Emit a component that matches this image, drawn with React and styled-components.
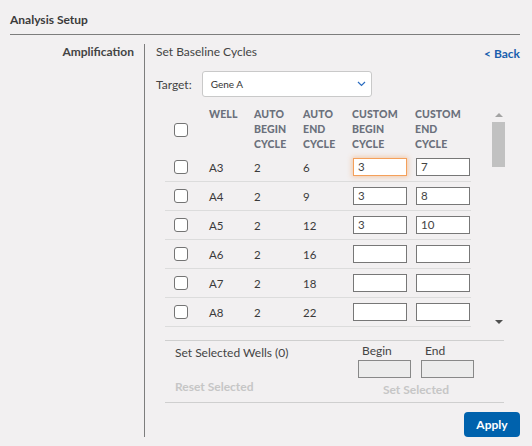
import React from "react";
import styled, { createGlobalStyle } from "styled-components";

const Global = createGlobalStyle`
  html, body { margin: 0; padding: 0; background: #f2f0f1; }
  body { font-family: Lato, "Noto Sans", Arial, sans-serif; color: #333; }
  * { box-sizing: border-box; }
`;

const Page = styled.div`
  width: 532px;
  height: 446px;
  padding: 0 12px 0 10px;
  background: #f2f0f1;
  overflow: hidden;
`;

const TitleBar = styled.div`
  height: 35px;
  padding-top: 5px;
  display: flex;
  align-items: center;
  border-bottom: 1px solid #7d7d7d;
  font-size: 12px;
  font-weight: 700;
  color: #3b3b3b;
`;

const Body = styled.div`
  display: flex;
  margin-top: 9px;
`;

const SideLabel = styled.div`
  width: 135px;
  padding-right: 10px;
  padding-top: 1px;
  text-align: right;
  border-right: 1px solid #7d7d7d;
  font-size: 12px;
  font-weight: 700;
  line-height: 14px;
  color: #444;
`;

const Content = styled.div`
  flex: 1;
  padding-left: 11px;
  display: flex;
  flex-direction: column;
`;

const TopRow = styled.div`
  display: flex;
  justify-content: space-between;
  align-items: flex-start;
  height: 15px;
  padding-top: 1px;
  font-size: 12px;
  line-height: 14px;
  color: #444;
`;

const BackLink = styled.a`
  color: #1a5fae;
  font-weight: 700;
  font-size: 12px;
  line-height: 14px;
  margin-top: 2px;
  text-decoration: none;
`;

const TargetRow = styled.div`
  display: flex;
  align-items: center;
  gap: 10px;
  margin-top: 12px;
  font-size: 12px;
  color: #444;
`;

const Select = styled.div`
  width: 170px;
  height: 26px;
  background: #fff;
  border: 1px solid #c9c9c9;
  border-radius: 3px;
  display: flex;
  align-items: center;
  justify-content: space-between;
  padding: 0 5px 0 8px;
  font-size: 10px;
  color: #333;
`;

const TableArea = styled.div`
  margin-top: 9px;
  margin-left: 9px;
  width: 340px;
  height: 224px;
  display: flex;
  overflow: hidden;
`;

const Table = styled.div`
  width: 306px;
  display: flex;
  flex-direction: column;
`;

const cols = "44px 45px 49px 49px 63px 56px";

const HeaderRow = styled.div`
  display: grid;
  grid-template-columns: ${cols};
  height: 47px;
  padding-top: 1px;
  font-size: 10.5px;
  font-weight: 900;
  line-height: 15px;
  color: #6b707c;
  letter-spacing: 0.1px;
`;

const CheckCell = styled.div`
  display: flex;
  align-items: center;
  padding-left: 9px;
`;

const Box = styled.span`
  display: block;
  width: 14px;
  height: 14px;
  border: 1px solid #747474;
  border-radius: 3px;
  background: #fff;
`;

const Row = styled.div`
  display: grid;
  grid-template-columns: ${cols};
  height: 29px;
  align-items: center;
  border-bottom: 1px solid #dcdcdc;
  font-size: 11.5px;
  color: #3a3a3a;
`;

const Cell = styled.div`
  padding-left: ${(p) => p.$pl || 0}px;
`;

const CycleInput = styled.div`
  width: 54px;
  height: 18px;
  background: #fff;
  border: 1px solid ${(p) => (p.$focus ? "#f4a05a" : "#777")};
  box-shadow: ${(p) => (p.$focus ? "0 0 5px 1px rgba(245,150,80,0.45)" : "none")};
  font-size: 11.5px;
  line-height: 16px;
  padding-left: 4px;
  color: #444;
  margin-left: ${(p) => p.$ml || 0}px;
`;

const Scrollbar = styled.div`
  margin-left: 21px;
  width: 13px;
  display: flex;
  flex-direction: column;
  align-items: center;
  padding: 7px 0 6px;
`;

const Arrow = styled.span`
  width: 0;
  height: 0;
  border-left: 4px solid transparent;
  border-right: 4px solid transparent;
  ${(p) =>
    p.$down
      ? "border-top: 4px solid #505050; margin-top: auto;"
      : "border-bottom: 4px solid #a3a3a3;"}
`;

const Thumb = styled.div`
  width: 13px;
  height: 45px;
  background: #c1c1c1;
  margin-top: 5px;
`;

const BottomSection = styled.div`
  margin-top: 10px;
  margin-left: 9px;
  width: 339px;
  height: 63px;
  border-top: 1px solid #cfcfcf;
  border-bottom: 1px solid #cfcfcf;
  display: flex;
  justify-content: space-between;
  padding-right: 30px;
`;

const LeftCol = styled.div`
  padding-left: 10px;
  padding-top: 5px;
  display: flex;
  flex-direction: column;
  font-size: 12px;
  line-height: 14px;
  color: #444;
`;

const DisabledAction = styled.span`
  font-weight: 700;
  color: #c6c6c6;
  font-size: 12px;
  line-height: 14px;
  margin-top: ${(p) => p.$mt}px;
  text-align: ${(p) => p.$align || "left"};
`;

const RightCol = styled.div`
  padding-top: 3px;
  display: flex;
  flex-direction: column;
`;

const FieldRow = styled.div`
  display: flex;
  gap: 10px;
`;

const Field = styled.div`
  display: flex;
  flex-direction: column;
  font-size: 12px;
  line-height: 14px;
  color: #444;
  & > span {
    padding-left: 4px;
    margin-bottom: 2px;
  }
`;

const GrayInput = styled.div`
  width: 53px;
  height: 18px;
  background: #ececec;
  border: 1px solid #888;
`;

const Footer = styled.div`
  display: flex;
  justify-content: flex-end;
  margin-top: 9px;
`;

const ApplyButton = styled.button`
  width: 56px;
  height: 25px;
  border: none;
  border-radius: 4px;
  background: #0062ad;
  color: #fff;
  font-family: inherit;
  font-size: 12px;
  font-weight: 700;
  padding: 0;
`;

const Chevron = () => (
  <svg width="9" height="6" viewBox="0 0 9 6">
    <path d="M1 1l3.5 3.5L8 1" fill="none" stroke="#2a6cc0" strokeWidth="1.2" />
  </svg>
);

const rows = [
  { well: "A3", b: 2, e: 6, cb: "3", ce: "7", focus: true },
  { well: "A4", b: 2, e: 9, cb: "3", ce: "8" },
  { well: "A5", b: 2, e: 12, cb: "3", ce: "10" },
  { well: "A6", b: 2, e: 16, cb: "", ce: "" },
  { well: "A7", b: 2, e: 18, cb: "", ce: "" },
  { well: "A8", b: 2, e: 22, cb: "", ce: "" },
];

export default function App() {
  return (
    <Page>
      <Global />
      <TitleBar>Analysis Setup</TitleBar>
      <Body>
        <SideLabel>Amplification</SideLabel>
        <Content>
          <TopRow>
            <span>Set Baseline Cycles</span>
            <BackLink>&lt; Back</BackLink>
          </TopRow>
          <TargetRow>
            <span>Target:</span>
            <Select>
              <span>Gene A</span>
              <Chevron />
            </Select>
          </TargetRow>
          <TableArea>
            <Table>
              <HeaderRow>
                <CheckCell>
                  <Box />
                </CheckCell>
                <Cell>WELL</Cell>
                <Cell>AUTO<br />BEGIN<br />CYCLE</Cell>
                <Cell>AUTO<br />END<br />CYCLE</Cell>
                <Cell>CUSTOM<br />BEGIN<br />CYCLE</Cell>
                <Cell>CUSTOM<br />END<br />CYCLE</Cell>
              </HeaderRow>
              {rows.map((r) => (
                <Row key={r.well}>
                  <CheckCell>
                    <Box />
                  </CheckCell>
                  <Cell>{r.well}</Cell>
                  <Cell>{r.b}</Cell>
                  <Cell>{r.e}</Cell>
                  <Cell>
                    <CycleInput $ml={1} $focus={r.focus}>{r.cb}</CycleInput>
                  </Cell>
                  <Cell>
                    <CycleInput $ml={1}>{r.ce}</CycleInput>
                  </Cell>
                </Row>
              ))}
            </Table>
            <Scrollbar>
              <Arrow />
              <Thumb />
              <Arrow $down />
            </Scrollbar>
          </TableArea>
          <BottomSection>
            <LeftCol>
              <span>Set Selected Wells (0)</span>
              <DisabledAction $mt={20}>Reset Selected</DisabledAction>
            </LeftCol>
            <RightCol>
              <FieldRow>
                <Field>
                  <span>Begin</span>
                  <GrayInput />
                </Field>
                <Field>
                  <span>End</span>
                  <GrayInput />
                </Field>
              </FieldRow>
              <DisabledAction $mt={5} $align="center">Set Selected</DisabledAction>
            </RightCol>
          </BottomSection>
          <Footer>
            <ApplyButton>Apply</ApplyButton>
          </Footer>
        </Content>
      </Body>
    </Page>
  );
}
